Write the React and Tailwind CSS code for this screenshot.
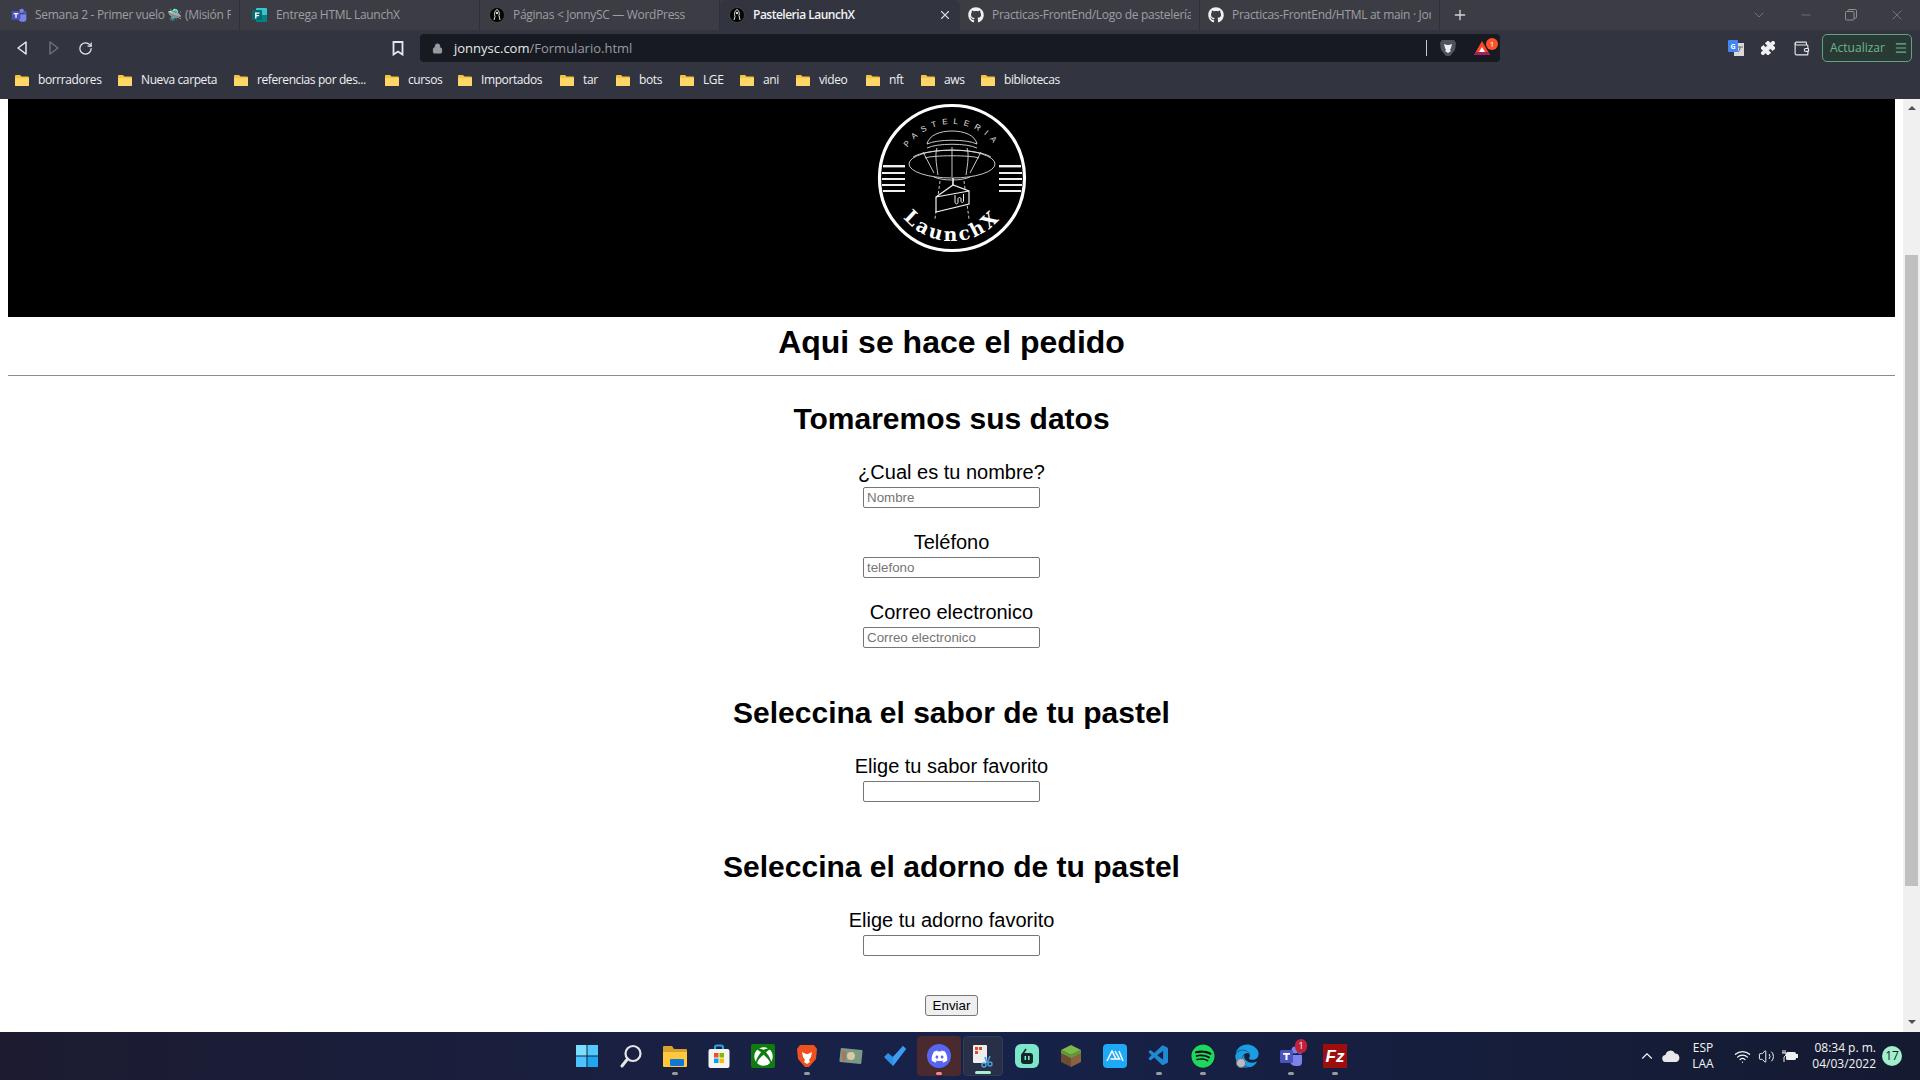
import React from 'react';
import { FaGithub, FaDiscord, FaSpotify, FaXbox, FaEdge } from 'react-icons/fa';
import { VscVscode } from 'react-icons/vsc';
import { ChevronUp, Volume2, Wifi, Puzzle, Wallet, RotateCw, Plus, X, Minus, ChevronDown, Lock, Menu } from 'lucide-react';

const ui = { fontFamily: '"Open Sans","Noto Sans",sans-serif' };

function TeamsIcon({ s = 16 }) {
  return (
    <svg width={s} height={s} viewBox="0 0 24 24">
      <circle cx="16" cy="6" r="3.5" fill="#7b83eb" />
      <circle cx="21" cy="8" r="2.4" fill="#5059c9" />
      <path d="M11 11h12v7a4 4 0 0 1-4 4h-3a5 5 0 0 1-5-5z" fill="#7b83eb" />
      <rect x="1" y="6" width="13" height="13" rx="1.5" fill="#4b53bc" />
      <path d="M4 9h7v1.8H8.5V16H6.5v-5.2H4z" fill="#fff" />
    </svg>
  );
}

function FormsIcon() {
  return (
    <svg width="16" height="16" viewBox="0 0 16 16">
      <rect x="4" y="1" width="11" height="14" rx="1" fill="#37c6d0" />
      <rect x="4" y="8" width="11" height="7" fill="#038387" />
      <rect x="0" y="3" width="10" height="10" rx="1" fill="#036c70" />
      <path d="M3 5.5h4.5v1.2H4.5v1.4h2.6v1.2H4.5v2.2H3z" fill="#fff" />
    </svg>
  );
}

function WpFavicon() {
  return (
    <svg width="16" height="16" viewBox="0 0 16 16">
      <circle cx="8" cy="8" r="7.5" fill="#050505" stroke="#555" strokeWidth="0.6" />
      <path d="M8 2.5C5.5 4 5 7 6 9.5L5 13M8 2.5c2 1 2.8 3.5 2 6l1 4.5" fill="none" stroke="#ddd" strokeWidth="1" />
      <circle cx="8" cy="6" r="1.2" fill="#ddd" />
    </svg>
  );
}

function Tab({ icon, title, active, last, pad = 'pl-[8px]' }) {
  return (
    <div className={`relative flex items-center w-[240px] h-[30px] ${pad} pr-[8px] shrink-0 ${active ? 'bg-[#32353f] rounded-t-[6px] text-[#f2f2f3]' : 'text-[#9d9ea3]'} ${!active ? 'border-r border-[#2f3037]' : ''}`}>
      <span className="w-[16px] h-[16px] mr-[8px] flex items-center justify-center shrink-0">{icon}</span>
      <span className={`text-[12px] leading-[16px] whitespace-nowrap overflow-hidden flex-1 ${active ? 'font-semibold tracking-[-0.5px]' : 'tracking-[-0.3px]'}`}>{title}</span>
      {active && <X size={14} strokeWidth={2} className="text-[#d5d5d8] ml-[2px] shrink-0" />}
    </div>
  );
}

function Folder() {
  return (
    <svg width="16" height="16" viewBox="0 0 16 16" className="shrink-0">
      <path d="M1 4a1 1 0 0 1 1-1h4l1.5 1.5H14a1 1 0 0 1 1 1V13a1 1 0 0 1-1 1H2a1 1 0 0 1-1-1z" fill="#f5c242" />
      <path d="M1 6h14v7a1 1 0 0 1-1 1H2a1 1 0 0 1-1-1z" fill="#ffd768" />
    </svg>
  );
}

const bookmarks = [
  ['borrradores', 'w-[103px]'],
  ['Nueva carpeta', 'w-[116px]'],
  ['referencias por des...', 'w-[151px]'],
  ['cursos', 'w-[73px]'],
  ['Importados', 'w-[102px]'],
  ['tar', 'w-[56px]'],
  ['bots', 'w-[64px]'],
  ['LGE', 'w-[60px]'],
  ['ani', 'w-[56px]'],
  ['video', 'w-[70px]'],
  ['nft', 'w-[55px]'],
  ['aws', 'w-[60px]'],
  ['bibliotecas', 'w-[90px]'],
];

function Logo() {
  return (
    <svg width="150" height="150" viewBox="0 0 150 150">
      <defs>
        <path id="arcTop" d="M21 75a54 54 0 0 1 108 0" />
        <path id="arcBot" d="M12 75a63 63 0 0 0 126 0" />
      </defs>
      <circle cx="75" cy="75" r="72.5" fill="none" stroke="#fff" strokeWidth="3.2" />
      <text fill="#e0e0e0" fontSize="8" letterSpacing="5.6" style={{ fontFamily: '"Liberation Sans",sans-serif' }}>
        <textPath href="#arcTop" startOffset="50%" textAnchor="middle">PASTELERIA</textPath>
      </text>
      <text fill="#fff" fontSize="19" fontWeight="700" letterSpacing="2.6" style={{ fontFamily: '"DejaVu Serif",serif' }}>
        <textPath href="#arcBot" startOffset="50%" textAnchor="middle">LaunchX</textPath>
      </text>
      <g fill="none" stroke="#dcdcdc" strokeWidth="0.9">
        <path d="M50 41c2-9 13-13 25-13s23 4 25 13" />
        <path d="M50 41c10-5 40-5 50 0M50 45c10-5 40-5 50 0" />
        <ellipse cx="75" cy="61" rx="43" ry="14" />
        <path d="M36 54c14-9 64-9 78 0" />
        <path d="M48 55c8-3 46-3 54 0" />
        <path d="M60 45c-2 6-1 14 1 27M75 44v30M90 45c2 6 1 14-1 27M46 49l11 21M104 49l-11 21" />
        <path d="M57 74c8 4 28 4 36 0" />
        <path d="M63 78l-5 38M87 78l5 38" strokeDasharray="3 2" />
      </g>
      <g stroke="#f0f0f0" fill="#000" strokeWidth="1.2">
        <path d="M59 94l17-12 16 6v13l-33 8z" />
        <path d="M59 94l33-6" fill="none" />
        <path d="M76 82v-7" strokeWidth="1.6" />
        <path d="M78 92v7c0 2.500 3 2.500 3 0v-3c0-2 3-2 3 0v2c0 2 2.500 2 2.500 0v-7" fill="none" strokeWidth="1" />
      </g>
      <g fill="#f0f0f0">
        <rect x="6" y="62" width="22" height="2.400" />
        <rect x="5" y="69" width="23" height="2" />
        <rect x="5" y="75" width="23" height="2" />
        <rect x="5" y="81" width="23" height="2" />
        <rect x="6" y="87" width="22" height="2" />
        <rect x="122" y="62" width="22" height="2.400" />
        <rect x="122" y="69" width="23" height="2" />
        <rect x="122" y="75" width="23" height="2" />
        <rect x="122" y="81" width="23" height="2" />
        <rect x="122" y="87" width="22" height="2" />
      </g>
    </svg>
  );
}

function Field({ label, placeholder, first }) {
  return (
    <div className={first ? 'mt-[23px]' : 'mt-[22px]'}>
      <label className="block text-[20px] leading-[25px] text-black">{label}</label>
      <input
        placeholder={placeholder}
        className="block mx-auto mt-[2px] w-[177px] h-[21px] border border-[#767676] rounded-[2px] px-[3px] text-[13.33px] text-left placeholder:text-[#757575] bg-white"
      />
    </div>
  );
}

const H2 = ({ children, className }) => (
  <h2 className={`text-[30px] leading-[37px] font-bold text-black ${className}`}>{children}</h2>
);

const Tile = ({ children, className = '', dot, dotClass = 'bg-[#9a9a9f] w-[6px]' }) => (
  <div className={`relative w-[44px] h-[40px] flex items-center justify-center rounded-[4px] ${className}`}>
    {children}
    {dot && <span className={`absolute bottom-[1px] h-[3px] rounded-full ${dotClass}`} />}
  </div>
);

function TaskIcons() {
  return (
    <div className="flex items-center">
      <Tile>
        <svg width="24" height="24" viewBox="0 0 24 24"><g fill="#4cc2ff"><rect x="1" y="1" width="10.5" height="10.5" fill="#7adfff" /><rect x="12.5" y="1" width="10.5" height="10.5" fill="#52c8ff" /><rect x="1" y="12.5" width="10.5" height="10.5" /><rect x="12.5" y="12.5" width="10.5" height="10.5" fill="#1ea7f0" /></g></svg>
      </Tile>
      <Tile>
        <svg width="24" height="24" viewBox="0 0 24 24" fill="none" stroke="#e6e6e8" strokeWidth="2.2"><circle cx="14" cy="9.5" r="7.5" /><path d="M8.5 15L3 22" strokeLinecap="round" strokeWidth="3" /></svg>
      </Tile>
      <Tile dot>
        <svg width="24" height="24" viewBox="0 0 24 24"><path d="M0 3a1 1 0 0 1 1-1h8l2 3h12a1 1 0 0 1 1 1v3H0z" fill="#d9a22f" /><path d="M0 8h24v14a1 1 0 0 1-1 1H1a1 1 0 0 1-1-1z" fill="#ffc83d" /><rect x="7" y="15" width="14" height="7" rx="1" fill="#0f78d4" /></svg>
      </Tile>
      <Tile>
        <svg width="24" height="24" viewBox="0 0 24 24"><path d="M8 6V3.5a2 2 0 0 1 2-2h4a2 2 0 0 1 2 2V6" fill="none" stroke="#2aa7e8" strokeWidth="2" /><rect x="1.5" y="5" width="21" height="19" rx="2" fill="#f4f4f4" /><rect x="7" y="9" width="4.5" height="4.5" fill="#f25022" /><rect x="12.5" y="9" width="4.5" height="4.5" fill="#7fba00" /><rect x="7" y="14.5" width="4.5" height="4.5" fill="#00a4ef" /><rect x="12.5" y="14.5" width="4.5" height="4.5" fill="#ffb900" /></svg>
      </Tile>
      <Tile>
        <div className="w-[24px] h-[24px] rounded-[2px] bg-[#107c10] flex items-center justify-center"><FaXbox size={19} color="#fff" /></div>
      </Tile>
      <Tile dot>
        <svg width="24" height="24" viewBox="0 0 24 24"><path d="M5 1h14l3 4-1 10-7 8h-4l-7-8L2 5z" fill="#f1501f" /><path d="M7 8l4 2h2l4-2-1 5-2 3 1 2-3 2-3-2 1-2-2-3z" fill="#fff" /></svg>
      </Tile>
      <Tile>
        <svg width="24" height="24" viewBox="0 0 24 24"><rect x="1" y="5" width="22" height="14" rx="1" fill="#7b9a84" transform="rotate(6 12 12)" /><circle cx="12" cy="12" r="4" fill="#d8c9a8" /><rect x="3" y="7" width="4" height="10" fill="#b9675a" opacity="0.7" /></svg>
      </Tile>
      <Tile>
        <svg width="24" height="24" viewBox="0 0 24 24"><path d="M1 13l4-4 5 4L20 2l3 3-13 17z" fill="#2f8fe6" /><path d="M10 13L20 2l3 3-13 17z" fill="#3f9bf0" /></svg>
      </Tile>
      <Tile className="bg-[#4a2a2e]" dot dotClass="bg-[#f08a8f] w-[6px]">
        <div className="w-[24px] h-[24px] rounded-full bg-[#5865f2] flex items-center justify-center"><FaDiscord size={17} color="#fff" /></div>
      </Tile>
      <Tile className="bg-[#273046] border border-[#333c52] !w-[40px] mx-[2px]" dot dotClass="bg-[#a5f0cf] w-[16px]">
        <svg width="24" height="24" viewBox="0 0 24 24"><rect x="2" y="1" width="14" height="18" rx="1" fill="#eee" /><rect x="4" y="3" width="3" height="3" fill="#e04a2b" /><rect x="4" y="7" width="3" height="3" fill="#e04a2b" /><rect x="8" y="3" width="3" height="3" fill="#e04a2b" /><path d="M14 13l2 6M19 12l-3 7" stroke="#4a9fe0" strokeWidth="1.6" /><circle cx="13" cy="21" r="2" fill="none" stroke="#4a9fe0" strokeWidth="1.4" /><circle cx="19" cy="20" r="2" fill="none" stroke="#4a9fe0" strokeWidth="1.4" /></svg>
      </Tile>
      <Tile>
        <div className="w-[24px] h-[24px] rounded-[6px] bg-[#7ee6c8] flex items-center justify-center">
          <svg width="14" height="16" viewBox="0 0 14 16"><rect x="1" y="5" width="12" height="11" rx="3" fill="#10282a" /><path d="M2 7L6 1" stroke="#10282a" strokeWidth="1.6" /><rect x="4.5" y="8" width="1.6" height="4" fill="#7ee6c8" /><rect x="8" y="8" width="1.6" height="4" fill="#7ee6c8" /></svg>
        </div>
      </Tile>
      <Tile>
        <svg width="24" height="24" viewBox="0 0 24 24"><path d="M12 1l10 5-10 5L2 6z" fill="#7eb84a" /><path d="M2 6l10 5v12L2 18z" fill="#6d4c33" /><path d="M22 6l-10 5v12l10-5z" fill="#8a6242" /><path d="M2 6l10 5v3L2 9zM22 6l-10 5v3l10-5z" fill="#5f9c38" /></svg>
      </Tile>
      <Tile>
        <div className="w-[24px] h-[24px] rounded-[4px] bg-[#1ea9f7] flex items-center justify-center">
          <svg width="18" height="12" viewBox="0 0 18 12" fill="none" stroke="#fff" strokeWidth="1.5"><path d="M1 11L6 1l4 8H4.5M9 1l4.500 8H8M13 1l4 10" /></svg>
        </div>
      </Tile>
      <Tile dot><VscVscode size={24} color="#1f8ad2" /></Tile>
      <Tile dot>
        <div className="w-[24px] h-[24px] rounded-full bg-[#111] flex items-center justify-center"><FaSpotify size={24} color="#1ed760" /></div>
      </Tile>
      <Tile>
        <FaEdge size={24} color="#1b9de2" />
        <span className="absolute left-[11px] bottom-[8px] w-[10px] h-[10px] rounded-full bg-[#b8bcc2] border border-[#6f747c]" />
      </Tile>
      <Tile dot>
        <TeamsIcon s={24} />
        <span className="absolute top-[3px] right-[6px] w-[12px] h-[14px] rounded-full bg-[#c4203a] text-white text-[9px] leading-[14px] text-center" style={ui}>1</span>
      </Tile>
      <Tile dot>
        <div className="w-[24px] h-[24px] bg-[#9f0e0e] flex items-center justify-center text-white text-[17px] leading-none font-bold italic" style={{ fontFamily: '"Liberation Sans",sans-serif' }}>Fz</div>
      </Tile>
    </div>
  );
}

export default function App() {
  return (
    <div className="w-[1920px] h-[1080px] flex flex-col overflow-hidden bg-white">
      {/* tab strip */}
      <div className="h-[30px] bg-[#3c3d44] flex items-center shrink-0" style={ui}>
        <div className="flex">
          <Tab pad="pl-[11px]" icon={<TeamsIcon />} title="Semana 2 - Primer vuelo 🛸 (Misión Fi" />
          <Tab pad="pl-[12px]" icon={<FormsIcon />} title="Entrega HTML LaunchX" />
          <Tab pad="pl-[9px]" icon={<WpFavicon />} title="Páginas < JonnySC — WordPress" />
          <Tab pad="pl-[9px]" icon={<WpFavicon />} title="Pasteleria LaunchX" active />
          <Tab icon={<FaGithub size={16} color="#f0f0f0" />} title="Practicas-FrontEnd/Logo de pastelería" />
          <Tab icon={<FaGithub size={16} color="#f0f0f0" />} title="Practicas-FrontEnd/HTML at main · Jor" last />
        </div>
        <Plus size={16} strokeWidth={2} className="text-[#d4d4d7] ml-[12px]" />
        <div className="ml-auto flex items-center text-[#8e8f95]">
          <ChevronDown size={16} strokeWidth={1} className="mr-[32px]" />
          <Minus size={14} strokeWidth={1} className="mr-[32px]" />
          <svg width="12" height="12" viewBox="0 0 12 12" fill="none" stroke="currentColor" className="mr-[32px]"><rect x="0.500" y="2.500" width="8.500" height="8.500" rx="1" /><path d="M3 2.500V1.500a1 1 0 0 1 1-1h6.500a1 1 0 0 1 1 1V8a1 1 0 0 1-1 1H9" /></svg>
          <X size={16} strokeWidth={1} className="mr-[15px]" />
        </div>
      </div>

      {/* toolbar */}
      <div className="h-[34px] pt-[2px] bg-[#32353f] flex items-center shrink-0" style={ui}>
        <div className="w-[420px] flex items-center shrink-0">
          <svg width="12" height="16" viewBox="0 0 12 16" fill="none" stroke="#e8e8ea" strokeWidth="1.5" className="ml-[16px]"><path d="M10 2L2 8l8 6z" strokeLinejoin="round" /></svg>
          <svg width="12" height="16" viewBox="0 0 12 16" fill="none" stroke="#6d6f77" strokeWidth="1.5" className="ml-[20px]"><path d="M2 2l8 6-8 6z" strokeLinejoin="round" /></svg>
          <RotateCw size={15} strokeWidth={2} className="text-[#e8e8ea] ml-[18px]" />
          <svg width="12" height="15" viewBox="0 0 12 15" fill="none" stroke="#e8e8ea" strokeWidth="1.8" className="ml-[299px]"><path d="M1.500 1h9v12.500L6 10.500l-4.500 3z" /></svg>
        </div>
        <div className="w-[1080px] h-[28px] bg-[#171a21] rounded-[4px] flex items-center shrink-0 relative">
          <Lock size={11} fill="#9a9ba1" strokeWidth={2} className="text-[#9a9ba1] ml-[12px]" />
          <span className="text-[13px] ml-[11px] pt-[1px] text-[#e8e8ea] whitespace-nowrap">jonnysc.com<span className="text-[#9a9ba1]">/Formulario.html</span></span>
          <span className="ml-auto w-px h-[16px] bg-[#c8c8cc]" />
          <svg width="16" height="18" viewBox="0 0 16 18" className="ml-[13px]"><path d="M2 1h12l2 3-1 7-5 6H6l-5-6-1-7z" fill="#50525c" /><path d="M4 5l3 1h2l3-1-1 4-1 2 1 1-3 2-3-2 1-1-1-2z" fill="#eee" /></svg>
          <svg width="18" height="16" viewBox="0 0 18 16" className="ml-[17px] mr-[9px]"><path d="M9 1l8 14H1z" fill="#ff4724" /><path d="M1 15h16l-2-3H3z" fill="#9e1f63" /><path d="M9 7l3 5H6z" fill="#fff" /></svg>
          <span className="absolute right-[2px] top-[4px] w-[12px] h-[12px] rounded-full bg-[#fb542b] text-white text-[8px] leading-[12px] text-center">1</span>
        </div>
        <div className="flex items-center flex-1">
          <svg width="16" height="16" viewBox="0 0 16 16" className="ml-[228px]"><rect x="6" y="3" width="10" height="13" fill="#d9d9d9" /><rect x="0" y="0" width="10" height="12" rx="1" fill="#4285f4" /><text x="2.500" y="8.500" fontSize="7" fontWeight="700" fill="#fff">G</text><path d="M10 7h5M12 7c0 3-1 4-2 5" stroke="#666" fill="none" /></svg>
          <Puzzle size={16} fill="#f0f0f2" strokeWidth={1.5} className="text-[#f0f0f2] ml-[16px]" />
          <Wallet size={17} strokeWidth={1.6} className="text-[#e8e8ea] ml-[17px]" />
          <div className="ml-[12px] w-[90px] h-[28px] rounded-[5px] border border-[#62a57c] bg-[#293a36] flex items-center pl-[7px] text-[#71b58b]">
            <span className="text-[12px]">Actualizar</span>
            <Menu size={14} strokeWidth={2} className="ml-[9px]" />
          </div>
        </div>
      </div>

      {/* bookmarks */}
      <div className="h-[35px] pb-[3px] bg-[#32353f] flex items-center pl-[14px] shrink-0" style={ui}>
        {bookmarks.map(([name, w]) => (
          <div key={name} className={`flex items-center gap-[8px] shrink-0 ${w}`}>
            <Folder />
            <span className="text-[12px] text-[#f0f0f2] whitespace-nowrap tracking-[-0.4px]">{name}</span>
          </div>
        ))}
      </div>

      {/* viewport */}
      <div className="flex flex-1 min-h-0">
        <div className="flex-1 min-w-0 px-[8px] text-center overflow-hidden" style={{ fontFamily: '"Liberation Sans",Arial,sans-serif' }}>
          <div className="h-[218px] bg-black flex justify-center items-start pt-[4px]">
            <Logo />
          </div>
          <h1 className="mt-[7px] text-[32px] leading-[37px] font-bold text-black">Aqui se hace el pedido</h1>
          <hr className="mt-[14px] border-t border-[#8c8c8c]" />
          <H2 className="mt-[24px]">Tomaremos sus datos</H2>
          <Field first label="¿Cual es tu nombre?" placeholder="Nombre" />
          <Field label="Teléfono" placeholder="telefono" />
          <Field label="Correo electronico" placeholder="Correo electronico" />
          <H2 className="mt-[46px]">Seleccina el sabor de tu pastel</H2>
          <Field first label="Elige tu sabor favorito" />
          <H2 className="mt-[46px]">Seleccina el adorno de tu pastel</H2>
          <Field first label="Elige tu adorno favorito" />
          <button className="block mx-auto mt-[39px] w-[53px] h-[21px] border border-[#767676] rounded-[3px] bg-[#efefef] text-[13.33px] leading-[19px] text-black">Enviar</button>
        </div>
        {/* scrollbar */}
        <div className="w-[17px] bg-[#f0f0f0] shrink-0 flex flex-col items-center">
          <svg width="8" height="4" viewBox="0 0 8 4" className="mt-[7px]"><path d="M4 0l4 4H0z" fill="#505050" /></svg>
          <div className="w-[13px] h-[631px] bg-[#c0c0c0] mt-[145px]" />
          <svg width="8" height="4" viewBox="0 0 8 4" className="mt-[134px]"><path d="M0 0h8L4 4z" fill="#505050" /></svg>
        </div>
      </div>

      {/* taskbar */}
      <div className="h-[48px] shrink-0 relative flex items-center justify-center bg-gradient-to-r from-[#1c1b30] via-[#17224a] to-[#141a30]" style={ui}>
        <div className="pl-[2px]"><TaskIcons /></div>
        <div className="absolute right-0 inset-y-0 flex items-center text-[#f4f4f6]">
          <ChevronUp size={18} strokeWidth={1.5} className="mr-[6px]" />
          <svg width="18" height="12" viewBox="0 0 18 12" className="mr-[11px]"><path d="M4 12a3.500 3.500 0 0 1-.5-7A5 5 0 0 1 13 3.500 4.300 4.300 0 0 1 14 12z" fill="#e8e8ea" /></svg>
          <div className="text-[12px] leading-[16px] text-center w-[24px] mr-[19px]">ESP<br />LAA</div>
          <Wifi size={17} strokeWidth={1.8} className="mr-[7px]" />
          <Volume2 size={17} strokeWidth={1.4} className="mr-[7px]" />
          <svg width="16" height="14" viewBox="0 0 16 14" className="mr-[8px]"><rect x="4" y="3" width="10" height="8" rx="1.500" fill="#f0f0f0" /><rect x="14" y="5" width="2" height="4" fill="#f0f0f0" /><path d="M1 1v3M3 1v3M0 4h4v2L2 8v5" stroke="#f0f0f0" fill="none" /></svg>
          <div className="text-[12px] leading-[16px] text-right w-[70px]">08:34 p. m.<br />04/03/2022</div>
          <div className="ml-[6px] mr-[18px] w-[20px] h-[20px] rounded-full bg-[#a1efcc] text-[#10181f] text-[12px] leading-[20px] text-center">17</div>
        </div>
      </div>
    </div>
  );
}
